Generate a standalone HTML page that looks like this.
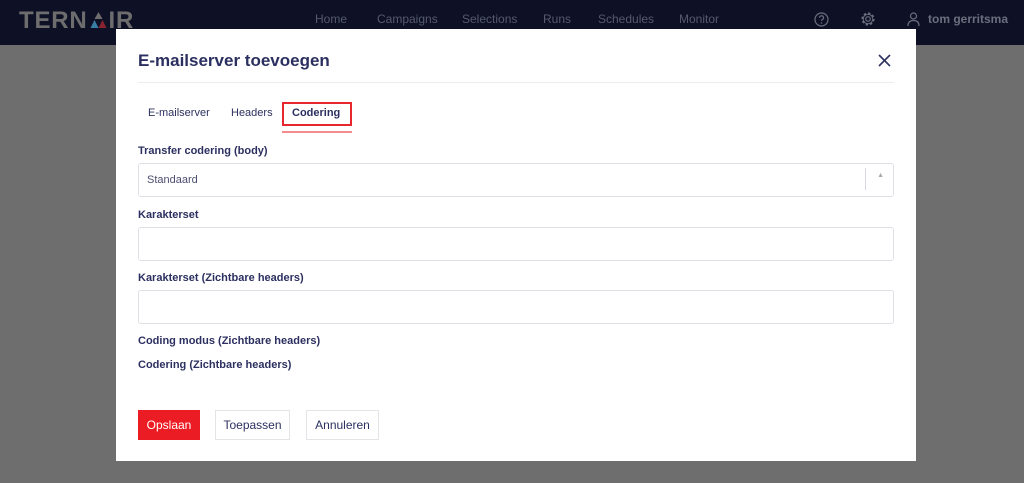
<!DOCTYPE html>
<html><head><meta charset="utf-8"><style>
*{margin:0;padding:0;box-sizing:border-box}
body{width:1024px;height:483px;overflow:hidden;background:#6e6e6e;font-family:"Liberation Sans",sans-serif;position:relative}
.nav{position:absolute;left:0;top:0;width:1024px;height:45px;background:#0e1126}
.nav .logo{position:absolute;left:19px;top:7px;font-weight:bold;font-size:24px;color:#6d6d6d;letter-spacing:0.8px}
.nav a{position:absolute;top:12px;font-size:12px;color:#555a6a}
.modal{position:absolute;left:116px;top:29px;width:800px;height:432px;background:#fff}
.t{position:absolute;color:#2c3060}
.lbl{position:absolute;left:22px;font-size:11px;font-weight:bold;color:#2c3060}
.inp{position:absolute;left:22px;width:756px;height:34px;border:1px solid #dfe0e6;border-radius:3px}
.btn{position:absolute;top:381px;height:30px;border:1px solid #e3e3e8;font-size:12px;color:#2c3060;text-align:center;line-height:28px}
</style></head><body>
<div class="nav">
<div class="logo">TERN<span style="display:inline-block;width:21px;position:relative;top:2px"><svg width="21" height="18" viewBox="0 0 20 18"><polygon points="10,0 14,7 6,7" fill="#6d6d6d"/><polygon points="6,8 10,16 2,16" fill="#3a7ea6"/><polygon points="14,8 18,16 10,16" fill="#8a2230"/></svg></span>IR</div>
<a style="left:315px">Home</a><a style="left:377px">Campaigns</a><a style="left:462px">Selections</a><a style="left:543px">Runs</a><a style="left:598px">Schedules</a><a style="left:679px">Monitor</a>
<svg style="position:absolute;left:814px;top:12px" width="15" height="15" viewBox="0 0 15 15"><circle cx="7.5" cy="7.5" r="6.5" fill="none" stroke="#6a6e7c" stroke-width="1.2"/><path d="M5.5 5.8a2 2 0 1 1 2.6 1.9c-.5.2-.6.6-.6 1.2" fill="none" stroke="#6a6e7c" stroke-width="1.2"/><circle cx="7.5" cy="11" r=".8" fill="#6a6e7c"/></svg>
<svg style="position:absolute;left:860px;top:11px" width="16" height="16" viewBox="0 0 16 16"><circle cx="8" cy="8" r="2.3" fill="none" stroke="#6a6e7c" stroke-width="1.2"/><circle cx="8" cy="8" r="5.5" fill="none" stroke="#6a6e7c" stroke-width="2.2" stroke-dasharray="2.2 2.1"/><circle cx="8" cy="8" r="4.8" fill="none" stroke="#6a6e7c" stroke-width="1"/></svg>
<svg style="position:absolute;left:907px;top:12px" width="13" height="15" viewBox="0 0 13 15"><circle cx="6.5" cy="4" r="3" fill="none" stroke="#6a6e7c" stroke-width="1.2"/><path d="M1 14c0-4 2.5-5.5 5.5-5.5S12 10 12 14" fill="none" stroke="#6a6e7c" stroke-width="1.2"/></svg>
<a style="left:928px;color:#6a6e7c;font-weight:bold">tom gerritsma</a>
</div>
<div class="modal">
<div class="t" style="left:22px;top:22px;font-size:17px;font-weight:bold">E-mailserver toevoegen</div>
<svg style="position:absolute;left:762px;top:25px" width="13" height="13" viewBox="0 0 13 13"><path d="M1 1L12 12M12 1L1 12" stroke="#2c3060" stroke-width="1.6"/></svg>
<div style="position:absolute;left:22px;top:53px;width:756px;height:1px;background:#ececf0"></div>
<div class="t" style="left:32px;top:78px;font-size:11px">E-mailserver</div>
<div class="t" style="left:115px;top:78px;font-size:11px">Headers</div>
<div style="position:absolute;left:166px;top:73px;width:70px;height:24px;border:2px solid #e8262e"></div>
<div class="t" style="left:176px;top:78px;font-size:11px;font-weight:bold">Codering</div>
<div style="position:absolute;left:166px;top:102px;width:70px;height:2px;background:#f28a8e"></div>
<div class="lbl" style="top:116px">Transfer codering (body)</div>
<div class="inp" style="top:134px"><span style="position:absolute;left:8px;top:10px;font-size:11px;color:#4a4e70">Standaard</span><div style="position:absolute;right:27px;top:4px;width:1px;height:22px;background:#d8d9e0"></div><span style="position:absolute;right:9px;top:8px;font-size:7px;color:#aaa">▲</span></div>
<div class="lbl" style="top:180px">Karakterset</div>
<div class="inp" style="top:198px"></div>
<div class="lbl" style="top:243px">Karakterset (Zichtbare headers)</div>
<div class="inp" style="top:261px"></div>
<div class="lbl" style="top:306px">Coding modus (Zichtbare headers)</div>
<div class="lbl" style="top:330px">Codering (Zichtbare headers)</div>
<div class="btn" style="left:22px;width:62px;background:#ec1c24;border-color:#ec1c24;color:#fff">Opslaan</div>
<div class="btn" style="left:99px;width:75px">Toepassen</div>
<div class="btn" style="left:190px;width:73px">Annuleren</div>
</div>
</body></html>
